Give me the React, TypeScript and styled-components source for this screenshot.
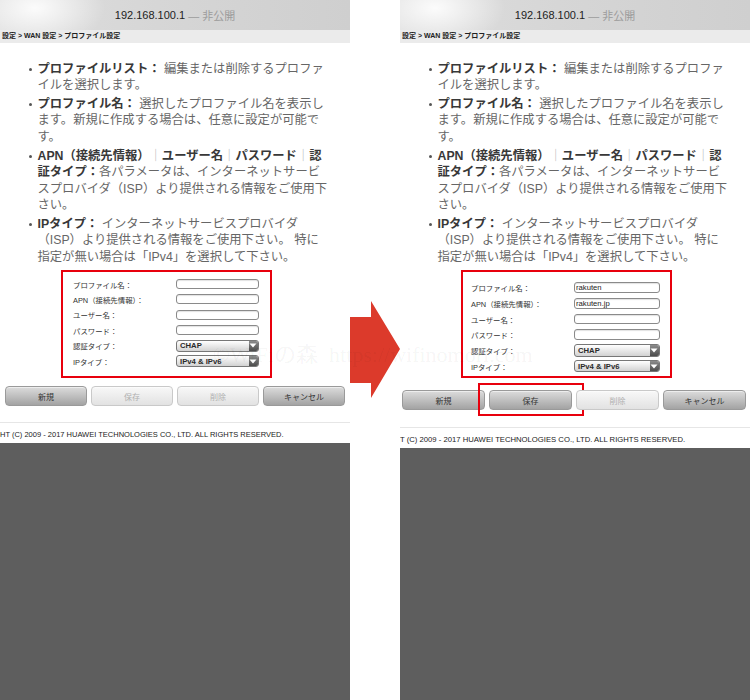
import React from 'react';
import styled, { createGlobalStyle } from 'styled-components';

const GlobalStyle = createGlobalStyle`
  html, body {
    margin: 0;
    padding: 0;
    background: #fff;
  }
  body {
    font-family: "Liberation Sans", "Noto Sans CJK JP", sans-serif;
  }
`;

type Layout = {
  padTop: number;
  padBottom: number;
  padLeft: number;
  rowH: number;
  fieldW: number;
  inputH: number;
  selectH: number;
  btnTop: number;
  btnPadLeft: number;
  btnW: number;
  footTop: number;
  footIndent: number;
  footSize: number;
};

const leftLayout: Layout = {
  padTop: 4.3,
  padBottom: 7.3,
  padLeft: 10,
  rowH: 15.4,
  fieldW: 83,
  inputH: 10,
  selectH: 12,
  btnTop: 8,
  btnPadLeft: 5,
  btnW: 82,
  footTop: 16,
  footIndent: -34.6,
  footSize: 7.5,
};

const rightLayout: Layout = {
  padTop: 7.9,
  padBottom: 2.2,
  padLeft: 8,
  rowH: 15.66,
  fieldW: 86,
  inputH: 10.7,
  selectH: 12.7,
  btnTop: 12,
  btnPadLeft: 2,
  btnW: 83,
  footTop: 16.7,
  footIndent: -41,
  footSize: 7.7,
};

const Page = styled.div`
  position: relative;
  width: 750px;
  height: 700px;
  display: flex;
  overflow: hidden;
  background: #fff;
`;

const Screen = styled.div`
  width: 350px;
  flex: none;
  display: flex;
  flex-direction: column;
  overflow: hidden;
`;

const AddressBar = styled.div`
  height: 30px;
  display: flex;
  align-items: center;
  justify-content: center;
  font-size: 11px;
  color: #222;
  background:
    radial-gradient(ellipse 70px 40px at 35px 8px, rgba(255, 255, 255, 0.9), rgba(255, 255, 255, 0)),
    linear-gradient(to right, #dedede, #d6d6d6 45%, #cfcfcf);
`;

const Private = styled.span`
  color: #9b9b9b;
  margin-left: 3px;
`;

const Breadcrumb = styled.div`
  height: 12.5px;
  line-height: 12.5px;
  padding-left: 2px;
  background: #ebebeb;
  font-size: 7px;
  font-weight: bold;
  color: #222;
  white-space: nowrap;
`;

const HelpList = styled.ul`
  margin: 18px 0 0;
  padding: 0 0 0 29px;
  list-style: none;
  font-size: 12.3px;
  line-height: 16.3px;
  color: #666;
`;

const HelpItem = styled.li`
  display: flex;
  white-space: nowrap;

  & + & {
    margin-top: 3px;
  }
`;

const Dot = styled.span`
  flex: none;
  width: 3px;
  height: 3px;
  margin: 7px 5.5px 0 0;
  border-radius: 50%;
  background: #555;
`;

const Term = styled.b`
  color: #383838;
  font-weight: bold;
`;

const Sep = styled.span`
  color: #b5b5b5;
`;

const FormBox = styled.div<{ $l: Layout }>`
  box-sizing: border-box;
  width: 211px;
  margin: 5px 0 0 61px;
  padding: ${(p) => `${p.$l.padTop}px 0 ${p.$l.padBottom}px ${p.$l.padLeft}px`};
  border: 2px solid #e8000d;
`;

const FormRow = styled.div<{ $l: Layout }>`
  display: grid;
  grid-template-columns: 103px ${(p) => p.$l.fieldW}px;
  align-items: center;
  height: ${(p) => p.$l.rowH}px;
`;

const Label = styled.span`
  font-size: 7.4px;
  color: #333;
  white-space: nowrap;
`;

const TextField = styled.input<{ $h: number }>`
  box-sizing: border-box;
  width: 100%;
  height: ${(p) => p.$h}px;
  margin: 0;
  padding: 0 1px;
  border: 1px solid #8a8a8a;
  border-radius: 3px;
  background: #fff;
  box-shadow: inset 0 1px 1px rgba(0, 0, 0, 0.12);
  font-family: "Liberation Sans", sans-serif;
  font-size: 7.7px;
  color: #222;
  outline: none;
`;

const Dropdown = styled.div<{ $h: number }>`
  box-sizing: border-box;
  display: flex;
  align-items: stretch;
  height: ${(p) => p.$h}px;
  border: 1px solid #777;
  border-radius: 3px;
  overflow: hidden;
  background: linear-gradient(#ffffff, #d2d2d2);
`;

const DropdownValue = styled.span`
  flex: 1;
  display: flex;
  align-items: center;
  padding-left: 3px;
  font-size: 7.7px;
  font-weight: bold;
  color: #2a2a2a;
  white-space: nowrap;
`;

const DropdownArrow = styled.span`
  flex: none;
  width: 9.5px;
  display: flex;
  align-items: center;
  justify-content: center;
  background: linear-gradient(#8c8c8c, #4c4c4c);
`;

const ButtonRow = styled.div<{ $l: Layout }>`
  display: flex;
  gap: 4px;
  margin-top: ${(p) => p.$l.btnTop}px;
  padding-left: ${(p) => p.$l.btnPadLeft}px;
`;

const ButtonSlot = styled.div<{ $w: number }>`
  position: relative;
  width: ${(p) => p.$w}px;
  flex: none;
`;

const Button = styled.button`
  box-sizing: border-box;
  display: block;
  width: 100%;
  height: 20px;
  margin: 0;
  padding: 0;
  border: 1px solid #9a9a9a;
  border-radius: 4px;
  background: linear-gradient(#dcdcdc, #a3a3a3);
  box-shadow: inset 0 1px 0 rgba(255, 255, 255, 0.5);
  font-family: "Liberation Sans", "Noto Sans CJK JP", sans-serif;
  font-size: 8px;
  color: #333;

  &:disabled {
    border-color: #c9c9c9;
    background: linear-gradient(#f8f8f8, #e2e2e2);
    color: #b0b0b0;
  }
`;

const Highlight = styled.span`
  position: absolute;
  left: -11px;
  right: -12px;
  top: -7px;
  bottom: -6px;
  border: 2px solid #e8000d;
  pointer-events: none;
`;

const Footer = styled.div<{ $l: Layout }>`
  height: 21px;
  margin-top: ${(p) => p.$l.footTop}px;
  padding-top: 7px;
  box-sizing: border-box;
  border-top: 1px solid #e6e6e6;
  font-size: ${(p) => p.$l.footSize}px;
  line-height: 10px;
  color: #222;
  white-space: nowrap;
  text-indent: ${(p) => p.$l.footIndent}px;
`;

const DarkArea = styled.div`
  flex: 1;
  background: #5e5e5e;
`;

const Gap = styled.div`
  width: 50px;
  flex: none;
  padding-top: 301px;
`;

const Watermark = styled.div`
  position: absolute;
  left: 213px;
  top: 336px;
  font-family: "Liberation Serif", "Noto Sans CJK JP", serif;
  font-size: 22px;
  color: rgba(0, 0, 0, 0.05);
  white-space: pre;
  pointer-events: none;
`;

type Field = { label: string; kind: 'input' | 'select'; value: string };

const fieldsFor = (filled: boolean): Field[] => [
  { label: 'プロファイル名：', kind: 'input', value: filled ? 'rakuten' : '' },
  { label: 'APN（接続先情報）：', kind: 'input', value: filled ? 'rakuten.jp' : '' },
  { label: 'ユーザー名：', kind: 'input', value: '' },
  { label: 'パスワード：', kind: 'input', value: '' },
  { label: '認証タイプ：', kind: 'select', value: 'CHAP' },
  { label: 'IPタイプ：', kind: 'select', value: 'IPv4 & IPv6' },
];

const Help: React.FC = () => (
  <HelpList>
    <HelpItem>
      <Dot />
      <span>
        <Term>プロファイルリスト：</Term> 編集または削除するプロファ
        <br />
        イルを選択します。
      </span>
    </HelpItem>
    <HelpItem>
      <Dot />
      <span>
        <Term>プロファイル名：</Term> 選択したプロファイル名を表示し
        <br />
        ます。新規に作成する場合は、任意に設定が可能で
        <br />
        す。
      </span>
    </HelpItem>
    <HelpItem>
      <Dot />
      <span>
        <Term>APN（接続先情報）</Term>
        <Sep>｜</Sep>
        <Term>ユーザー名</Term>
        <Sep>｜</Sep>
        <Term>パスワード</Term>
        <Sep>｜</Sep>
        <Term>認</Term>
        <br />
        <Term>証タイプ：</Term>各パラメータは、インターネットサービ
        <br />
        スプロバイダ（ISP）より提供される情報をご使用下
        <br />
        さい。
      </span>
    </HelpItem>
    <HelpItem>
      <Dot />
      <span>
        <Term>IPタイプ：</Term> インターネットサービスプロバイダ
        <br />
        （ISP）より提供される情報をご使用下さい。 特に
        <br />
        指定が無い場合は「IPv4」を選択して下さい。
      </span>
    </HelpItem>
  </HelpList>
);

const Arrow: React.FC = () => (
  <svg width="8" height="5" viewBox="0 0 8 5">
    <path d="M0.5 0.5 H7.5 L4 4.5 Z" fill="#fff" />
  </svg>
);

type PhoneProps = { layout: Layout; filled: boolean };

const Phone: React.FC<PhoneProps> = ({ layout, filled }) => {
  const buttons = [
    { text: '新規', disabled: false, mark: false },
    { text: '保存', disabled: !filled, mark: filled },
    { text: '削除', disabled: true, mark: false },
    { text: 'キャンセル', disabled: false, mark: false },
  ];

  return (
    <Screen>
      <AddressBar>
        192.168.100.1<Private>— 非公開</Private>
      </AddressBar>
      <Breadcrumb>設定 &gt; WAN 設定 &gt; プロファイル設定</Breadcrumb>
      <Help />
      <FormBox $l={layout}>
        {fieldsFor(filled).map((f) => (
          <FormRow key={f.label} $l={layout}>
            <Label>{f.label}</Label>
            {f.kind === 'input' ? (
              <TextField $h={layout.inputH} value={f.value} readOnly />
            ) : (
              <Dropdown $h={layout.selectH}>
                <DropdownValue>{f.value}</DropdownValue>
                <DropdownArrow>
                  <Arrow />
                </DropdownArrow>
              </Dropdown>
            )}
          </FormRow>
        ))}
      </FormBox>
      <ButtonRow $l={layout}>
        {buttons.map((b) => (
          <ButtonSlot key={b.text} $w={layout.btnW}>
            <Button disabled={b.disabled}>{b.text}</Button>
            {b.mark && <Highlight />}
          </ButtonSlot>
        ))}
      </ButtonRow>
      <Footer $l={layout}>COPYRIGHT (C) 2009 - 2017 HUAWEI TECHNOLOGIES CO., LTD. ALL RIGHTS RESERVED.</Footer>
      <DarkArea />
    </Screen>
  );
};

const App: React.FC = () => {
  return (
    <>
      <GlobalStyle />
      <Page>
        <Phone layout={leftLayout} filled={false} />
        <Gap>
          <svg width="50" height="98" viewBox="0 0 50 98">
            <polygon points="0,16 21,16 21,0 50,48 21,97 21,82 0,82" fill="#dc3a2b" />
          </svg>
        </Gap>
        <Phone layout={rightLayout} filled />
        <Watermark>{'©WiFiの森  https://wifinomori.com'}</Watermark>
      </Page>
    </>
  );
};

export default App;
